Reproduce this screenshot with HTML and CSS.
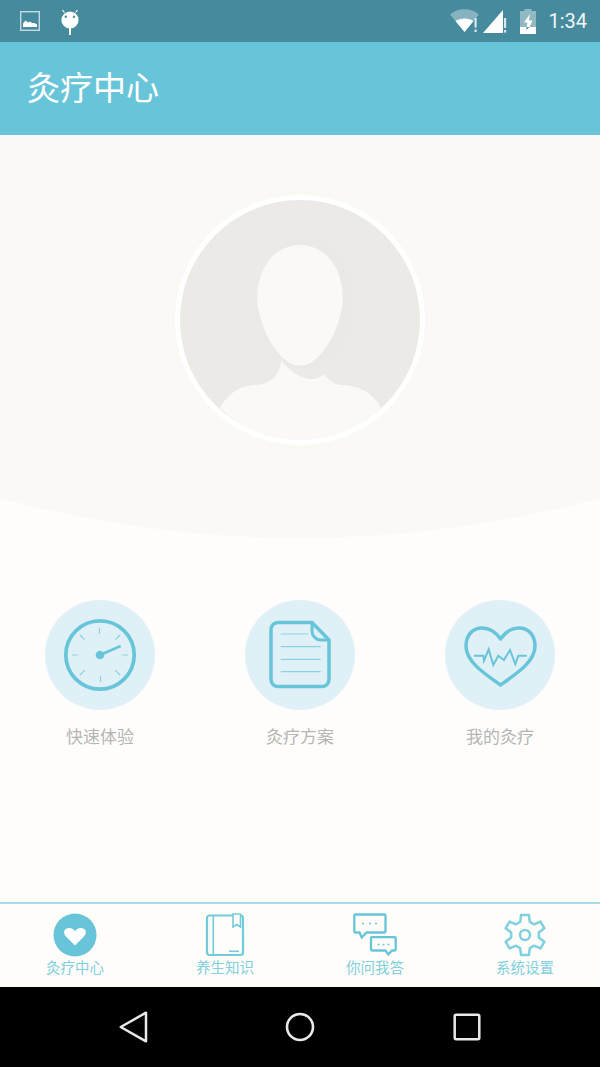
FILE: index.html
```html
<!DOCTYPE html>
<html lang="zh-CN">
<head>
    <meta charset="UTF-8">
    <meta name="viewport" content="width=device-width, initial-scale=1.0">
    <title>灸疗中心</title>
    <link rel="stylesheet" href="styles.css">
</head>
<body>
<div class="app">

    <div class="status-bar">
        <div class="status-left">
            <svg class="icon-picture" width="20" height="20" viewBox="0 0 20 20">
                <rect x="0.7" y="0.7" width="18.6" height="18.6" fill="none" stroke="#c3d9df" stroke-width="1.4"/>
                <path d="M3 16 V12.5 L5.5 9.5 L8 11.5 L10 10.5 L12 12 L14.5 12 L17 13.5 V16 Z" fill="#fff"/>
            </svg>
            <svg class="icon-android" width="20" height="27" viewBox="0 0 20 27">
                <circle cx="10" cy="11" r="8.6" fill="#fff"/>
                <path d="M4.5 3.5 L2.5 1 M15.5 3.5 L17.5 1" stroke="#fff" stroke-width="1.2" fill="none"/>
                <circle cx="5.8" cy="7.8" r="1.2" fill="#468a9d"/>
                <circle cx="14" cy="7.8" r="1.2" fill="#468a9d"/>
                <rect x="9" y="19" width="2" height="7" fill="#fff"/>
            </svg>
        </div>
        <div class="status-right">
            <svg width="31" height="24" viewBox="0 0 31 24">
                <path d="M0 5.5 C8 -1.5 21 -1.5 29 5.5 L14.5 23 Z" fill="#fff" fill-opacity="0.35"/>
                <path d="M5.5 12 C10.5 8.5 18.5 8.5 23.5 12 L14.5 23 Z" fill="#fff"/>
                <rect x="24.5" y="9" width="2.2" height="9.5" fill="#fff" fill-opacity="0.8"/>
                <rect x="24.5" y="20.5" width="2.2" height="2.5" fill="#fff" fill-opacity="0.8"/>
            </svg>
            <svg width="24" height="24" viewBox="0 0 24 24">
                <path d="M0 24 L20 1 V24 Z" fill="#fff"/>
                <rect x="21" y="9" width="2.2" height="10" fill="#fff" fill-opacity="0.8"/>
                <rect x="21" y="21" width="2.2" height="2.6" fill="#fff" fill-opacity="0.8"/>
            </svg>
            <svg class="icon-battery" width="16" height="25" viewBox="0 0 16 25">
                <path d="M4.5 0 H11.5 V2 H16 V18 H0 V2 H4.5 Z" fill="#fff" fill-opacity="0.4"/>
                <path d="M0 18 H16 V25 H0 Z" fill="#fff"/>
                <path d="M10 5 L4 13.5 H7.5 L6.6 18 H9.6 L12.5 11.5 H8.8 Z" fill="#fff"/>
                <path d="M6.6 18 L6 21 L9.6 18 Z" fill="#468a9d"/>
            </svg>
            <span class="clock">1:34</span>
        </div>
    </div>

    <header class="app-header">
        <h1>灸疗中心</h1>
    </header>

    <main class="content">
        <section class="hero">
            <svg class="avatar" width="250" height="250" viewBox="0 0 250 250">
                <circle cx="125" cy="125" r="122" fill="#ebeae7"/>
                <ellipse cx="132" cy="108" rx="50" ry="66" fill="#eae9e6"/>
                <path d="M45 213 C52 199 66 190 80 190 C96 190 106 178 106 165 C114 176 126 184 137 184 C142 184 146 182 149 179 C153 185 160 190 167 190 C184 190 199 199 206 213 A115 115 0 0 1 45 213 Z" fill="#faf9f5"/>
                <path d="M125 50 C150 50 167.7 72 167.7 102 C167.7 130 147 170.7 125 170.7 C103 170.7 82.3 130 82.3 102 C82.3 72 100 50 125 50 Z" fill="#faf9f5"/>
                <circle cx="125" cy="125" r="122.5" fill="none" stroke="#fff" stroke-width="5"/>
            </svg>
        </section>

        <section class="features">
            <a class="feature">
                <svg class="feature-icon" width="110" height="110" viewBox="0 0 110 110">
                    <circle cx="55" cy="55" r="55" fill="#dff0f6"/>
                    <circle cx="55" cy="55" r="34.2" fill="none" stroke="#68c5d9" stroke-width="3.7"/>
                    <path d="M54.5 28 V34 M55.5 76 V82 M27 55 H33 M77 55 H83 M35 35 L39.5 39.5 M75 35 L70.5 39.5 M35 75 L39.5 70.5 M75 75 L70.5 70.5" stroke="#8bd3e2" stroke-width="1.2" fill="none"/>
                    <path d="M55 55 L75.7 46" stroke="#68c5d9" stroke-width="2.5" fill="none"/>
                    <circle cx="55" cy="55" r="4.3" fill="#68c5d9"/>
                </svg>
                <span>快速体验</span>
            </a>
            <a class="feature">
                <svg class="feature-icon" width="110" height="110" viewBox="0 0 110 110">
                    <circle cx="55" cy="55" r="55" fill="#dff0f6"/>
                    <path d="M67 22.5 H33 a7 7 0 0 0 -7 7 V79.5 a7 7 0 0 0 7 7 H77 a7 7 0 0 0 7 -7 V40 Z" fill="none" stroke="#68c5d9" stroke-width="3.5" stroke-linejoin="round"/>
                    <path d="M67 22.5 V31 a9 9 0 0 0 9 9 H84" fill="none" stroke="#68c5d9" stroke-width="3"/>
                    <path d="M35.7 34 H63.3 M35.7 46.7 H75.7 M35.7 59.3 H75.7 M35.7 71.7 H75.7" stroke="#8bd3e2" stroke-width="1.2" fill="none"/>
                </svg>
                <span>灸疗方案</span>
            </a>
            <a class="feature">
                <svg class="feature-icon" width="110" height="110" viewBox="0 0 110 110">
                    <circle cx="55" cy="55" r="55" fill="#dff0f6"/>
                    <path d="M55.5 39 C50 31 43 28 37 28 C27 28 21 36 21 46 C21 62 40 74 55.5 85 C71 74 90 62 90 46 C90 36 84 28 74 28 C68 28 61 31 55.5 39 Z" fill="none" stroke="#68c5d9" stroke-width="3.5" stroke-linejoin="round"/>
                    <path d="M29 55.7 H38.3 L39 60.7 L43.7 49.3 L48.3 65 L53.3 55.7 L59 60 L65 50 L70.3 64 L73.3 55.7 H81.7" fill="none" stroke="#68c5d9" stroke-width="2"/>
                </svg>
                <span>我的灸疗</span>
            </a>
        </section>
    </main>

    <nav class="tab-bar">
        <a class="tab">
            <svg width="44" height="44" viewBox="0 0 44 44">
                <circle cx="22" cy="22" r="21.5" fill="#68c5d9"/>
                <path d="M22 32.5 L13 23.5 C9 19 12 15 16 15 C19 15 21 16.5 22 18.5 C23 16.5 25 15 28 15 C32 15 35 19 31 23.5 Z" fill="#fff"/>
            </svg>
            <span>灸疗中心</span>
        </a>
        <a class="tab">
            <svg width="44" height="44" viewBox="0 0 44 44">
                <rect x="4" y="2.5" width="36" height="39.5" rx="2.5" fill="none" stroke="#72cbdd" stroke-width="2.2"/>
                <path d="M10.3 3 V42" stroke="#72cbdd" stroke-width="1.6" fill="none"/>
                <path d="M30 1 H37.5 V14 L33.7 11.5 L30 14 Z" fill="#fefdf9" stroke="#72cbdd" stroke-width="1.6"/>
                <path d="M26 38.3 H36" stroke="#72cbdd" stroke-width="1.6" fill="none"/>
            </svg>
            <span>养生知识</span>
        </a>
        <a class="tab">
            <svg width="44" height="44" viewBox="0 0 44 44">
                <path d="M2.3 1.5 H31.5 a1 1 0 0 1 1 1 V18.5 a1 1 0 0 1 -1 1 H13.5 L8.7 24.5 L6.5 19.5 H2.3 a1 1 0 0 1 -1 -1 V2.5 a1 1 0 0 1 1 -1 Z" fill="none" stroke="#68c5d9" stroke-width="2.3"/>
                <path d="M19 24.2 H41.7 a1 1 0 0 1 1 1 V36.5 a1 1 0 0 1 -1 1 H39 L35.3 41.5 L32.5 37.5 H19 a1 1 0 0 1 -1 -1 V25.2 a1 1 0 0 1 1 -1 Z" fill="#fefdf9" stroke="#68c5d9" stroke-width="2.3"/>
                <path d="M9 10.5 H11 M16 10.5 H18 M22 10.5 H24 M24.5 31.5 H26.5 M29.5 31.5 H31.5 M34.5 31.5 H36.5" stroke="#68c5d9" stroke-width="1.6" fill="none"/>
            </svg>
            <span>你问我答</span>
        </a>
        <a class="tab">
            <svg width="44" height="44" viewBox="0 0 44 44">
                <path d="M17.21 8.84 L18.09 1.88 H25.91 L26.79 8.84 L31 11.28 L37.47 8.55 L41.38 15.33 L35.79 19.57 V24.43 L41.38 28.67 L37.47 35.45 L31 32.72 L26.79 35.16 L25.91 42.12 H18.09 L17.21 35.16 L13 32.72 L6.53 35.45 L2.62 28.67 L8.21 24.43 V19.57 L2.62 15.33 L6.53 8.55 L13 11.28 Z" fill="none" stroke="#7fd0e0" stroke-width="2.5" stroke-linejoin="round"/>
                <circle cx="22" cy="22" r="5" fill="none" stroke="#7fd0e0" stroke-width="2.5"/>
            </svg>
            <span>系统设置</span>
        </a>
    </nav>

    <div class="nav-bar">
        <div class="nav-key">
            <svg width="30" height="34" viewBox="0 0 30 34">
                <path d="M2.7 17 L28 2.7 V31.3 Z" fill="none" stroke="#e8e8e8" stroke-width="2.5" stroke-linejoin="round"/>
            </svg>
        </div>
        <div class="nav-key">
            <svg width="30" height="30" viewBox="0 0 30 30">
                <circle cx="15" cy="15" r="13" fill="none" stroke="#e8e8e8" stroke-width="2.6"/>
            </svg>
        </div>
        <div class="nav-key">
            <svg width="28" height="28" viewBox="0 0 28 28">
                <rect x="1.7" y="1.7" width="24.6" height="24.6" rx="1.5" fill="none" stroke="#e8e8e8" stroke-width="2.5"/>
            </svg>
        </div>
    </div>

</div>
</body>
</html>
```

FILE: styles.css
```css
body {
    margin: 0;
    padding: 0;
    font-family: "Noto Sans CJK SC", "Noto Sans", sans-serif;
    background-color: #fefdfb;
}

svg {
    display: block;
}

.app {
    display: flex;
    flex-direction: column;
    width: 600px;
    height: 1067px;
    overflow: hidden;
}

/* status bar */
.status-bar {
    display: flex;
    justify-content: space-between;
    align-items: center;
    flex: none;
    height: 42px;
    padding: 0 13px 0 20px;
    background-color: #468a9d;
}

.status-left {
    display: flex;
    align-items: center;
    gap: 20px;
}

.icon-android {
    margin-top: 2px;
}

.status-right {
    display: flex;
    align-items: center;
    gap: 2px;
}

.icon-battery {
    margin: 0 10px 0 11px;
}

.clock {
    font-family: Roboto, sans-serif;
    font-size: 20px;
    color: #f2f6f7;
}

/* header */
.app-header {
    display: flex;
    align-items: center;
    flex: none;
    height: 87px;
    padding: 0 0 6px 27px;
    background-color: #68c5d9;
}

.app-header h1 {
    margin: 0;
    font-size: 33px;
    font-weight: 400;
    color: #fff;
}

/* content */
.content {
    flex: 1;
}

.hero {
    height: 343px;
    padding-top: 60px;
    background-color: #faf9f5;
    clip-path: circle(1145px at 50% -742px);
}

.avatar {
    margin: 0 auto;
}

.features {
    display: grid;
    grid-template-columns: repeat(3, 200px);
    margin-top: 62px;
}

.feature {
    display: flex;
    flex-direction: column;
    align-items: center;
    gap: 13px;
    font-size: 17px;
    line-height: 25px;
    color: #b5b5b5;
}

/* bottom tabs */
.tab-bar {
    display: grid;
    grid-template-columns: repeat(4, 150px);
    flex: none;
    height: 74px;
    padding-top: 9px;
    border-top: 2px solid #a5dce9;
    background-color: #fefdf9;
}

.tab {
    display: flex;
    flex-direction: column;
    align-items: center;
    font-size: 14.5px;
    line-height: 20px;
    color: #7fd0e0;
}

/* android keys */
.nav-bar {
    display: flex;
    justify-content: center;
    align-items: center;
    flex: none;
    height: 80px;
    background-color: #000;
}

.nav-key {
    display: flex;
    justify-content: center;
    width: 167px;
}
```
